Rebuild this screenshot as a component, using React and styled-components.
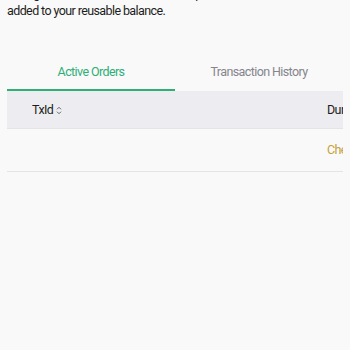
import React from "react";
import styled, { createGlobalStyle } from "styled-components";

const Global = createGlobalStyle`
  html, body {
    margin: 0;
    padding: 0;
    background: #f9f9f9;
    font-family: Roboto, "Liberation Sans", sans-serif;
    letter-spacing: -0.6px;
  }
`;

const Page = styled.div`
  padding: 0 7px;
  overflow: hidden;
  height: 350px;
`;

const Intro = styled.p`
  margin: -15px 0 0;
  font-size: 12.5px;
  line-height: 17px;
  color: #1d1d22;
  white-space: nowrap;
`;

const Tabs = styled.div`
  display: grid;
  grid-template-columns: 1fr 1fr;
  margin-top: 32px;
  border-bottom: 1px solid #ececef;
`;

const Tab = styled.button`
  height: 40px;
  border: 0;
  background: none;
  font-family: inherit;
  letter-spacing: inherit;
  font-size: 12.5px;
  padding: 0;
  color: ${(p) => (p.$active ? "#2eaf78" : "#85858c")};
  box-shadow: ${(p) => (p.$active ? "inset 0 -2px 0 #2eaf78" : "none")};
`;

const TableWrap = styled.div`
  overflow: hidden;
`;

const Table = styled.table`
  width: 560px;
  table-layout: fixed;
  border-collapse: collapse;
  font-size: 12.5px;
`;

const Th = styled.th`
  background: #ededf1;
  height: 36px;
  text-align: left;
  font-weight: 400;
  color: #1d1d22;
  padding: 0 0 0 ${(p) => p.$pad || 0}px;
  width: ${(p) => (p.$w ? `${p.$w}px` : "auto")};
  box-sizing: border-box;
  border-bottom: 1px solid #e4e4e8;
`;

const Td = styled.td`
  height: 42px;
  padding: 0 0 0 ${(p) => p.$pad || 0}px;
  border-bottom: 1px solid #e4e4e8;
  color: ${(p) => p.$color || "#1d1d22"};
`;

const Sort = () => (
  <svg width="6" height="9" viewBox="0 0 6 9" style={{ marginLeft: 3, verticalAlign: -1 }}>
    <path d="M1 3.3 L3 1.3 L5 3.3 M1 5.7 L3 7.7 L5 5.7" fill="none" stroke="#555" strokeWidth="0.9" />
  </svg>
);

export default function App() {
  return (
    <>
      <Global />
      <Page>
        <Intro>
          Change orders that are canceled or expired will be refunded and
          <br />
          added to your reusable balance.
        </Intro>
        <Tabs>
          <Tab $active>Active Orders</Tab>
          <Tab>Transaction History</Tab>
        </Tabs>
        <TableWrap>
          <Table>
            <thead>
              <tr>
                <Th $pad={25} $w={320}>
                  TxId
                  <Sort />
                </Th>
                <Th>Duration</Th>
              </tr>
            </thead>
            <tbody>
              <tr>
                <Td $pad={25}></Td>
                <Td $color="#c4a13a">Check</Td>
              </tr>
            </tbody>
          </Table>
        </TableWrap>
      </Page>
    </>
  );
}
